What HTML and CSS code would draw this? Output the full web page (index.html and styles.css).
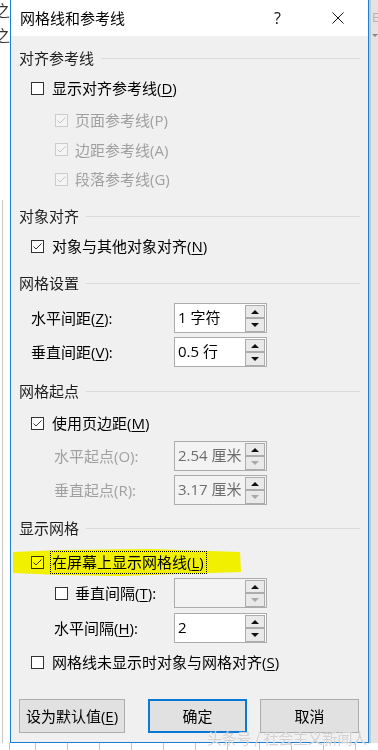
FILE: index.html
```html
<!DOCTYPE html>
<html lang="zh-CN">
<head>
<meta charset="utf-8">
<title>网格线和参考线</title>
<link rel="stylesheet" href="styles.css">
</head>
<body>
<div class="screen">
  <div class="side-left">
    <div class="ghost">之</div>
    <div class="ghost">之</div>
  </div>

  <div class="dialog">
    <div class="titlebar">
      <span class="title">网格线和参考线</span>
      <span class="help">?</span>
      <svg class="close" viewBox="0 0 12 12" width="12" height="12"><path d="M0.5 0.5L11.5 11.5M11.5 0.5L0.5 11.5" stroke="#111" stroke-width="1" fill="none"/></svg>
    </div>

    <div class="body">
      <div class="hdr m-first">对齐参考线</div>
      <div class="row cbrow lvl1">
        <svg class="cb" viewBox="0 0 13 13"><rect x="0.5" y="0.5" width="12" height="12" fill="#fff" stroke="#333"/></svg>
        <span class="lbl">显示对齐参考线(<u>D</u>)</span>
      </div>
      <div class="row cbrow lvl2 dis m2">
        <svg class="cb" viewBox="0 0 13 13"><rect x="0.5" y="0.5" width="12" height="12" fill="#f4f4f4" stroke="#ccc"/><path d="M2.5 6.5L5 9L10.5 3.5" fill="none" stroke="#c2c2c2"/></svg>
        <span class="lbl">页面参考线(P)</span>
      </div>
      <div class="row cbrow lvl2 dis h29">
        <svg class="cb" viewBox="0 0 13 13"><rect x="0.5" y="0.5" width="12" height="12" fill="#f4f4f4" stroke="#ccc"/><path d="M2.5 6.5L5 9L10.5 3.5" fill="none" stroke="#c2c2c2"/></svg>
        <span class="lbl">边距参考线(A)</span>
      </div>
      <div class="row cbrow lvl2 dis">
        <svg class="cb" viewBox="0 0 13 13"><rect x="0.5" y="0.5" width="12" height="12" fill="#f4f4f4" stroke="#ccc"/><path d="M2.5 6.5L5 9L10.5 3.5" fill="none" stroke="#c2c2c2"/></svg>
        <span class="lbl">段落参考线(G)</span>
      </div>

      <div class="hdr m7">对象对齐</div>
      <div class="row cbrow lvl1">
        <svg class="cb" viewBox="0 0 13 13"><rect x="0.5" y="0.5" width="12" height="12" fill="#fff" stroke="#333"/><path d="M2.5 6.5L5 9L10.5 3.5" fill="none" stroke="#333"/></svg>
        <span class="lbl">对象与其他对象对齐(<u>N</u>)</span>
      </div>

      <div class="hdr m7">网格设置</div>
      <div class="row spinrow m4">
        <span class="slbl lvl1">水平间距(<u>Z</u>):</span>
        <div class="spin">
          <span class="spin-val">1 字符</span>
          <span class="spin-btns"><span class="sb"><i class="tri up"></i></span><span class="sb"><i class="tri down"></i></span></span>
        </div>
      </div>
      <div class="row spinrow m2">
        <span class="slbl lvl1">垂直间距(<u>V</u>):</span>
        <div class="spin">
          <span class="spin-val">0.5 行</span>
          <span class="spin-btns"><span class="sb"><i class="tri up"></i></span><span class="sb"><i class="tri down"></i></span></span>
        </div>
      </div>

      <div class="hdr m8">网格起点</div>
      <div class="row cbrow lvl1 m2">
        <svg class="cb" viewBox="0 0 13 13"><rect x="0.5" y="0.5" width="12" height="12" fill="#fff" stroke="#333"/><path d="M2.5 6.5L5 9L10.5 3.5" fill="none" stroke="#333"/></svg>
        <span class="lbl">使用页边距(<u>M</u>)</span>
      </div>
      <div class="row spinrow m2">
        <span class="slbl lvl2 dis">水平起点(O):</span>
        <div class="spin spin-dis">
          <span class="spin-val">2.54 厘米</span>
          <span class="spin-btns"><span class="sb"><i class="tri up"></i></span><span class="sb"><i class="tri down off"></i></span></span>
        </div>
      </div>
      <div class="row spinrow m2">
        <span class="slbl lvl2 dis">垂直起点(R):</span>
        <div class="spin spin-dis">
          <span class="spin-val">3.17 厘米</span>
          <span class="spin-btns"><span class="sb"><i class="tri up"></i></span><span class="sb"><i class="tri down off"></i></span></span>
        </div>
      </div>

      <div class="hdr m7">显示网格</div>
      <div class="row cbrow lvl1 m4 marked">
        <svg class="cb" viewBox="0 0 13 13"><rect x="0.5" y="0.5" width="12" height="12" fill="#fff" stroke="#333"/><path d="M2.5 6.5L5 9L10.5 3.5" fill="none" stroke="#333"/></svg>
        <span class="lbl focus">在屏幕上显示网格线(<u>L</u>)</span>
        <svg class="marker" viewBox="0 0 232 30" width="232" height="30"><path d="M1 4L48 2L138 1L228 4L229 24L168 26L108 28L48 27L1 25Z" fill="#ffff00"/></svg>
      </div>
      <div class="row spinrow">
        <span class="slbl lvl2cb">
          <svg class="cb" viewBox="0 0 13 13"><rect x="0.5" y="0.5" width="12" height="12" fill="#fff" stroke="#333"/></svg>
          <span class="lbl">垂直间隔(<u>T</u>):</span>
        </span>
        <div class="spin spin-dis">
          <span class="spin-val"></span>
          <span class="spin-btns"><span class="sb"><i class="tri up"></i></span><span class="sb"><i class="tri down off"></i></span></span>
        </div>
      </div>
      <div class="row spinrow m3">
        <span class="slbl lvl2">水平间隔(<u>H</u>):</span>
        <div class="spin">
          <span class="spin-val">2</span>
          <span class="spin-btns"><span class="sb"><i class="tri up"></i></span><span class="sb"><i class="tri down"></i></span></span>
        </div>
      </div>
      <div class="row cbrow lvl1 m3">
        <svg class="cb" viewBox="0 0 13 13"><rect x="0.5" y="0.5" width="12" height="12" fill="#fff" stroke="#333"/></svg>
        <span class="lbl">网格线未显示时对象与网格对齐(<u>S</u>)</span>
      </div>

      <div class="buttons">
        <button class="btn btn-default">设为默认值(<u>E</u>)</button>
        <button class="btn btn-ok">确定</button>
        <button class="btn btn-cancel">取消</button>
      </div>
    </div>
  </div>

  <div class="side-right">
    <div class="rghost">E</div>
    <div class="rarrow"></div>
  </div>

  <div class="bottom-strip"></div>

  <div class="watermark">头条号 / 社会主义新闻人</div>
</div>
</body>
</html>
```

FILE: styles.css
```css
html, body {
  margin: 0;
  padding: 0;
}
body {
  width: 378px;
  height: 750px;
  overflow: hidden;
  background: #ffffff;
  font-family: "Open Sans", "Noto Sans CJK SC", sans-serif;
  font-size: 15px;
  color: #000;
}
.screen {
  position: relative;
  display: grid;
  grid-template-columns: 10px 359px 9px;
  grid-template-rows: 743px 7px;
  width: 378px;
  height: 750px;
}

/* background app, left */
.side-left {
  overflow: hidden;
  background: #fff;
  box-sizing: border-box;
  background-image: linear-gradient(#c8c8c8, #c8c8c8);
  background-size: 1px 543px;
  background-position: 2px 200px;
  background-repeat: no-repeat;
}
.ghost {
  white-space: nowrap;
  width: 10px;
  overflow: hidden;
  height: 25px;
  line-height: 20px;
  color: #333;
  font-family: "Noto Sans CJK SC", sans-serif;
  text-indent: -5px;
}

/* background app, right */
.side-right {
  background: #e3e3e3;
  border-left: 2px solid #c9c9c9;
  box-sizing: border-box;
  overflow: hidden;
}
.rghost {
  color: #b5b5b5;
  font-size: 13px;
  margin-top: 8px;
  margin-left: 1px;
}
.rarrow {
  margin-top: 8px;
  margin-left: 1px;
  width: 0;
  height: 0;
  border-left: 3px solid transparent;
  border-right: 3px solid transparent;
  border-top: 3px solid #888;
}

.bottom-strip {
  grid-column: 1 / 4;
  background-color: #fff;
  background-image: repeating-linear-gradient(90deg, transparent 0 3px, #c4c4c4 3px 4px, transparent 4px 32px);
  background-position: 32px 0;
}

/* dialog */
.dialog {
  border: 1px solid #1c7fd6;
  border-top: none;
  box-sizing: border-box;
  display: flex;
  flex-direction: column;
  background: #f0f0f0;
}
.titlebar {
  height: 36px;
  background: #fff;
  display: flex;
  align-items: center;
  padding-left: 9px;
  flex: none;
}
.title {
  font-family: "Noto Sans CJK SC", sans-serif;
  font-size: 15px;
  line-height: 20px;
  color: #000;
}
.help {
  margin-left: auto;
  font-size: 16px;
  line-height: 20px;
  color: #111;
}
.close {
  margin-left: 51px;
  margin-right: 24px;
}

.body {
  padding: 7px 8px 0 8px;
  flex: 1;
  display: flex;
  flex-direction: column;
}
.body u {
  text-decoration-thickness: 1px;
  text-underline-offset: 2px;
}

.hdr {
  height: 30px;
  display: flex;
  align-items: center;
  gap: 7px;
  color: #1e1e1e;
  line-height: 20px;
}
.hdr::after {
  content: "";
  flex: 1;
  height: 1px;
  background: #dadada;
}
.m-first { margin-top: 0; }
.m2 { margin-top: 2px; }
.m3 { margin-top: 3px; }
.m4 { margin-top: 4px; }
.m7 { margin-top: 7px; }
.m8 { margin-top: 8px; }

.row {
  display: flex;
  align-items: center;
  line-height: 20px;
}
.cbrow {
  height: 30px;
  gap: 8px;
}
.cbrow.h29 { height: 29px; }
.lvl1 { padding-left: 12px; }
.lvl2 { padding-left: 36px; }
.cbrow.lvl2 { gap: 7px; }
.cb {
  width: 13px;
  height: 13px;
  flex: none;
}
.dis { color: #a0a0a0; }

.marked { position: relative; }
.marker {
  position: absolute;
  left: -7px;
  top: 1px;
  mix-blend-mode: multiply;
  pointer-events: none;
}
.focus {
  outline: 1px dotted #000;
  outline-offset: 0;
  padding: 0 2px 1px 1px;
  margin-left: -1px;
}

.spinrow {
  height: 32px;
  display: grid;
  grid-template-columns: 155px 93px;
  align-items: center;
}
.slbl { white-space: nowrap; }
.slbl.lvl1 { padding-left: 12px; }
.slbl.lvl2 { padding-left: 35px; }
.lvl2cb {
  padding-left: 36px;
  display: flex;
  align-items: center;
  gap: 7px;
}
.spin {
  width: 93px;
  height: 30px;
  box-sizing: border-box;
  border: 1px solid #acacac;
  background: #fff;
  display: flex;
}
.spin-dis {
  background: #f3f3f3;
  color: #6d6d6d;
}
.spin-val {
  flex: 1;
  padding-left: 3px;
  line-height: 26px;
  white-space: nowrap;
  overflow: hidden;
}
.spin-btns {
  width: 20px;
  padding: 1px 1px 0 0;
  display: flex;
  flex-direction: column;
  gap: 0;
}
.sb {
  height: 13px;
  box-sizing: border-box;
  border: 1px solid #acacac;
  background: #e9e9e9;
  display: flex;
  align-items: center;
  justify-content: center;
}
.sb + .sb { height: 14px; }
.tri {
  width: 0;
  height: 0;
  border-left: 4px solid transparent;
  border-right: 4px solid transparent;
}
.tri.up { border-bottom: 4px solid #111; }
.tri.down { border-top: 4px solid #111; }
.tri.down.off { border-top-color: #a8a8a8; }

.buttons {
  margin-top: 22px;
  display: flex;
  height: 34px;
}
.btn {
  font-family: "Open Sans", "Noto Sans CJK SC", sans-serif;
  font-size: 15px;
  color: #000;
  background: #e1e1e1;
  border: 1px solid #adadad;
  height: 34px;
  padding: 0;
  line-height: 20px;
  box-sizing: border-box;
}
.btn-default { width: 106px; }
.btn-ok {
  width: 99px;
  margin-left: 23px;
  border: 2px solid #0a78d5;
}
.btn-cancel {
  width: 99px;
  margin-left: 13px;
}

.watermark {
  position: absolute;
  right: 11px;
  bottom: 3px;
  font-family: "Noto Sans CJK SC", sans-serif;
  font-size: 15px;
  line-height: 18px;
  color: rgba(205, 205, 205, 0.9);
  text-shadow: 0 0 1px rgba(255,255,255,0.8);
  letter-spacing: -0.2px;
}
```
